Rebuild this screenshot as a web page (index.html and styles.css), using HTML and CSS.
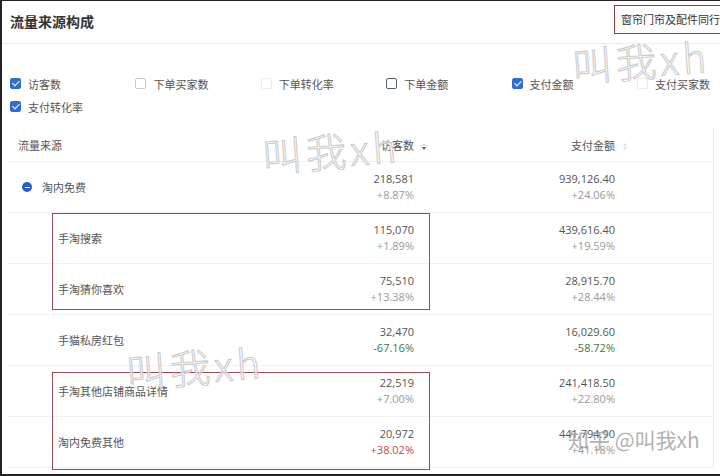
FILE: index.html
```html
<!DOCTYPE html>
<html lang="zh-CN">
  <head>
    <meta charset="UTF-8" />
    <meta name="viewport" content="width=device-width, initial-scale=1.0" />
    <title>流量来源构成</title>
    <link rel="stylesheet" href="styles.css">
  </head>
  <body>
    <div class="page">
      <div class="head">
        <h2 class="title">流量来源构成</h2>
        <div class="tag">窗帘门帘及配件同行</div>
      </div>

      <div class="filters">
        <label class="opt"><span class="box on"></span>访客数</label>
        <label class="opt"><span class="box"></span>下单买家数</label>
        <label class="opt"><span class="box off"></span>下单转化率</label>
        <label class="opt"><span class="box dark"></span>下单金额</label>
        <label class="opt"><span class="box on"></span>支付金额</label>
        <label class="opt"><span class="box off"></span>支付买家数</label>
        <label class="opt"><span class="box on"></span>支付转化率</label>
      </div>

      <div class="table">
        <div class="row thead">
          <div class="cell name">流量来源</div>
          <div class="cell num">访客数<span class="sort desc"><i class="up"></i><i class="down"></i></span></div>
          <div class="cell num">支付金额<span class="sort"><i class="up"></i><i class="down"></i></span></div>
          <div class="cell"></div>
        </div>
        <div class="row">
          <div class="cell name group"><span class="minus"></span>淘内免费</div>
          <div class="cell num">218,581<br><span class="pct">+8.87%</span></div>
          <div class="cell num">939,126.40<br><span class="pct">+24.06%</span></div>
          <div class="cell"></div>
        </div>
        <div class="row">
          <div class="cell name child">手淘搜索</div>
          <div class="cell num">115,070<br><span class="pct">+1.89%</span></div>
          <div class="cell num">439,616.40<br><span class="pct">+19.59%</span></div>
          <div class="cell"></div>
        </div>
        <div class="row">
          <div class="cell name child">手淘猜你喜欢</div>
          <div class="cell num">75,510<br><span class="pct">+13.38%</span></div>
          <div class="cell num">28,915.70<br><span class="pct">+28.44%</span></div>
          <div class="cell"></div>
        </div>
        <div class="row">
          <div class="cell name child">手猫私房红包</div>
          <div class="cell num">32,470<br><span class="pct down">-67.16%</span></div>
          <div class="cell num">16,029.60<br><span class="pct down">-58.72%</span></div>
          <div class="cell"></div>
        </div>
        <div class="row">
          <div class="cell name child">手淘其他店铺商品详情</div>
          <div class="cell num">22,519<br><span class="pct">+7.00%</span></div>
          <div class="cell num">241,418.50<br><span class="pct">+22.80%</span></div>
          <div class="cell"></div>
        </div>
        <div class="row">
          <div class="cell name child">淘内免费其他</div>
          <div class="cell num">20,972<br><span class="pct up">+38.02%</span></div>
          <div class="cell num">441,794.90<br><span class="pct">+41.18%</span></div>
          <div class="cell"></div>
        </div>
      </div>

      <!-- annotations drawn over the screenshot -->
      <div class="mark mark-1"></div>
      <div class="mark mark-2"></div>
      <div class="wm wm-1">叫我xh</div>
      <div class="wm wm-2">叫我xh</div>
      <div class="wm wm-3">叫我xh</div>
      <div class="zhihu">知乎 @叫我xh</div>
    </div>
  </body>
</html>
```

FILE: styles.css
```css
body {
  margin: 0;
  background: #fff;
  font-family: "Open Sans", "Noto Sans CJK SC", sans-serif;
  font-size: 11px;
  color: #555;
}
.page {
  position: relative;
  width: 720px;
  height: 476px;
  box-sizing: border-box;
  border-top: 1px solid #222;
  border-left: 2px solid #222;
  border-bottom: 2px solid #222;
  overflow: hidden;
  background: #fff;
}
.head {
  display: flex;
  justify-content: space-between;
  align-items: flex-start;
  height: 42px;
  border-bottom: 1px solid #ececec;
}
.title {
  margin: 0;
  padding: 11px 0 0 8px;
  font-family: "Noto Sans CJK SC", sans-serif;
  font-size: 14px;
  line-height: 18px;
  font-weight: 700;
  color: #333;
}
.tag {
  margin-top: 4px;
  height: 27px;
  line-height: 27px;
  padding: 0 0 0 6px;
  border: 1px solid #8c3b43;
  border-right: none;
  white-space: nowrap;
  font-family: "Noto Sans CJK SC", sans-serif;
  color: #333;
}
.filters {
  display: grid;
  grid-template-columns: repeat(6, 125.4px);
  padding: 28px 0 0 8px;
  font-family: "Noto Sans CJK SC", sans-serif;
}
.opt {
  display: flex;
  align-items: center;
  height: 23px;
  white-space: nowrap;
  color: #555;
}
.box {
  width: 9px;
  height: 9px;
  margin-right: 7px;
  border: 1px solid #c9c9c9;
  border-radius: 2px;
  position: relative;
}
.box.off {
  border-color: #ececec;
}
.box.dark {
  border-color: #556070;
}
.box.on {
  background: #2f6dd5;
  border-color: #2f6dd5;
}
.box.on::after {
  content: "";
  position: absolute;
  left: 3px;
  top: 0px;
  width: 3px;
  height: 6px;
  border: solid #fff;
  border-width: 0 1.5px 1.5px 0;
  transform: rotate(45deg);
}
.table {
  margin: 10px 0 0 6px;
  width: 705px;
  border-right: 1px solid #ececec;
}
.row {
  display: grid;
  grid-template-columns: 292px 114px 201px 1fr;
  height: 51px;
  border-bottom: 1px solid #f0f0f0;
  box-sizing: border-box;
}
.row.thead {
  height: 34px;
}
.cell {
  display: flex;
  flex-direction: column;
  justify-content: center;
  line-height: 16px;
}
.cell.num {
  display: block;
  align-self: center;
  text-align: right;
  color: #555;
}
.thead .cell.num {
  font-family: "Noto Sans CJK SC", sans-serif;
}
.cell.name {
  flex-direction: row;
  align-items: center;
  justify-content: flex-start;
  padding-left: 10px;
  font-family: "Noto Sans CJK SC", sans-serif;
  color: #555;
}
.cell.group {
  padding-left: 14px;
}
.cell.child {
  padding-left: 50px;
}
.minus {
  width: 10px;
  height: 10px;
  margin-right: 10px;
  border-radius: 50%;
  background: #2a5fc8;
  position: relative;
}
.minus::after {
  content: "";
  position: absolute;
  left: 2.5px;
  top: 4.5px;
  width: 5px;
  height: 1px;
  background: #fff;
}
.pct {
  color: #999;
}
.pct.down {
  color: #3d7b3d;
}
.pct.up {
  color: #c9474a;
}
.sort {
  display: inline-flex;
  flex-direction: column;
  gap: 1px;
  margin: 0 -13px 0 8px;
  vertical-align: middle;
  width: 5px;
}
.sort i {
  width: 0;
  height: 0;
  border-left: 2.5px solid transparent;
  border-right: 2.5px solid transparent;
}
.sort .up {
  border-bottom: 3px solid #ddd;
}
.sort .down {
  border-top: 3px solid #ddd;
}
.sort.desc .up {
  border-bottom-color: #d3dbe8;
}
.sort.desc .down {
  border-top-color: #2f5fb8;
}
.mark {
  position: absolute;
  left: 50px;
  width: 376px;
  border: 1.5px solid #9b4a55;
}
.mark-1 {
  top: 212px;
  height: 95px;
}
.mark-2 {
  top: 371px;
  height: 96px;
}
.wm {
  position: absolute;
  font-family: "Noto Sans CJK SC", sans-serif;
  font-size: 40px;
  font-weight: 300;
  color: rgba(255, 255, 255, 0.6);
  -webkit-text-stroke: 1px #c9c9c9;
  letter-spacing: 4px;
  transform: rotate(-4deg);
  white-space: nowrap;
}
.wm-1 {
  left: 570px;
  top: 30px;
}
.wm-2 {
  left: 260px;
  top: 120px;
}
.wm-3 {
  left: 124px;
  top: 336px;
}
.zhihu {
  position: absolute;
  left: 566px;
  top: 423px;
  font-family: "Noto Sans CJK SC", sans-serif;
  font-size: 21px;
  color: rgba(150, 150, 150, 0.75);
  white-space: nowrap;
}
```
